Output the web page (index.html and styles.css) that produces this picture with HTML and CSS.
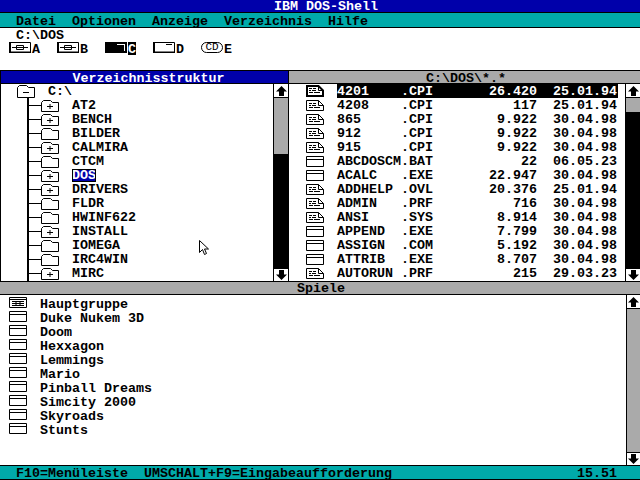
FILE: index.html
```html
<!DOCTYPE html>
<html lang="de">
<head>
<meta charset="utf-8">
<title>IBM DOS-Shell</title>
<link rel="stylesheet" href="styles.css">
</head>
<body>
<svg class="defs" width="0" height="0" aria-hidden="true">
  <symbol id="arrow-up" viewBox="0 0 11 10"><polygon points="5.5,0 11,5.5 8,5.5 8,10 3,10 3,5.5 0,5.5"/></symbol>
  <symbol id="arrow-down" viewBox="0 0 11 10"><polygon points="5.5,10 11,4.5 8,4.5 8,0 3,0 3,4.5 0,4.5"/></symbol>
  <symbol id="folder" viewBox="0 0 18 12"><path d="M.5 11.5V2.5L2.5.5H9.5L11.5 2.5H17.5V11.5Z" fill="#fff" stroke="#000"/></symbol>
  <symbol id="folder-plus" viewBox="0 0 18 12"><path d="M.5 11.5V2.5L2.5.5H9.5L11.5 2.5H17.5V11.5Z" fill="#fff" stroke="#000"/><path d="M6 6.5H12M9 4V9" stroke="#000" fill="none"/></symbol>
  <symbol id="folder-minus" viewBox="0 0 18 13"><path d="M.5 12.5V2.5L2.5.5H9.5L11.5 2.5H17.5V12.5Z" fill="#fff" stroke="#000"/><path d="M6 7.5H12" stroke="#000" fill="none"/></symbol>
  <symbol id="doc" viewBox="0 0 18 11"><path d="M.5.5H12.5L17.5 5.5V10.5H.5ZM12.5.5V5.5H17.5" fill="#fff" stroke="#000"/><path d="M3 3.5H6M7 3.5H10M3 5.5H5M6 5.5H10M3 7.5H7M8 7.5H14" stroke="#000" fill="none"/></symbol>
  <symbol id="doc-active" viewBox="0 0 18 12"><path d="M1 1H12.5L17 5.5V11H1Z" fill="#fff" stroke="#000" stroke-width="2"/><path d="M12.5 1V5.5H17" fill="none" stroke="#000"/><path d="M3 3.5H6M7 3.5H10M3 5.5H5M6 5.5H10M3 7.5H7M8 7.5H14" stroke="#000" fill="none"/></symbol>
  <symbol id="win" viewBox="0 0 18 11"><path d="M.5.5H17.5V10.5H.5ZM.5 3.5H17.5" fill="#fff" stroke="#000"/></symbol>
  <symbol id="group" viewBox="0 0 18 11"><path d="M.5.5H17.5V10.5H.5ZM.5 2.5H17.5" fill="#fff" stroke="#000"/><path d="M3 4.5H15M3 6.5H15M3 8.5H15M7 4V9M11 4V9" stroke="#000" fill="none"/></symbol>
  <symbol id="floppy" viewBox="0 0 22 11"><path d="M1 .5H21.5V10H1Z" fill="#fff" stroke="#000"/><path d="M0 0H2V11H0ZM0 10H22V11H0Z" fill="#000"/><path d="M3 5.5H19M7.5 3.5H14.5V7.5H7.5Z" stroke="#000" fill="none"/></symbol>
  <symbol id="disk" viewBox="0 0 22 11"><path d="M1 .5H21.5V10H1Z" fill="#fff" stroke="#000"/><path d="M0 0H2V11H0ZM0 10H22V11H0Z" fill="#000"/><path d="M13 2.5H19" stroke="#000" fill="none"/></symbol>
  <symbol id="disk-active" viewBox="0 0 22 11"><path d="M0 0H22V11H0Z" fill="#000"/><path d="M12 2H19V3H12ZM19 2H20V9H19Z" fill="#fff"/></symbol>
</svg>

<header class="title-bar">IBM DOS-Shell</header>
<nav class="menu-bar">
  <span>Datei</span><span>Optionen</span><span>Anzeige</span><span>Verzeichnis</span><span>Hilfe</span>
</nav>

<section class="drive-area">
  <div class="path">C:\DOS</div>
  <div class="drives">
    <div class="drive"><svg class="drive-icon"><use href="#floppy"/></svg><span>A</span></div>
    <div class="drive"><svg class="drive-icon"><use href="#floppy"/></svg><span>B</span></div>
    <div class="drive"><svg class="drive-icon"><use href="#disk-active"/></svg><span class="active">C</span></div>
    <div class="drive"><svg class="drive-icon"><use href="#disk"/></svg><span>D</span></div>
    <div class="drive"><span class="cd">CD</span><span>E</span></div>
  </div>
</section>

<section class="panes">
  <div class="pane pane-tree">
    <h2 class="pane-head head-active">Verzeichnisstruktur</h2>
    <div class="pane-body">
      <div class="tree">
        <div class="tree-root"><svg class="folder-root"><use href="#folder-minus"/></svg><span>C:\</span></div>
        <ul class="tree-list">
          <li class="tree-row"><i class="branch"></i><svg class="folder"><use href="#folder-plus"/></svg><span>AT2</span></li>
          <li class="tree-row"><i class="branch"></i><svg class="folder"><use href="#folder-plus"/></svg><span>BENCH</span></li>
          <li class="tree-row"><i class="branch"></i><svg class="folder"><use href="#folder"/></svg><span>BILDER</span></li>
          <li class="tree-row"><i class="branch"></i><svg class="folder"><use href="#folder-plus"/></svg><span>CALMIRA</span></li>
          <li class="tree-row"><i class="branch"></i><svg class="folder"><use href="#folder"/></svg><span>CTCM</span></li>
          <li class="tree-row"><i class="branch"></i><svg class="folder"><use href="#folder-plus"/></svg><span class="selected">DOS</span></li>
          <li class="tree-row"><i class="branch"></i><svg class="folder"><use href="#folder-plus"/></svg><span>DRIVERS</span></li>
          <li class="tree-row"><i class="branch"></i><svg class="folder"><use href="#folder"/></svg><span>FLDR</span></li>
          <li class="tree-row"><i class="branch"></i><svg class="folder"><use href="#folder"/></svg><span>HWINF622</span></li>
          <li class="tree-row"><i class="branch"></i><svg class="folder"><use href="#folder-plus"/></svg><span>INSTALL</span></li>
          <li class="tree-row"><i class="branch"></i><svg class="folder"><use href="#folder"/></svg><span>IOMEGA</span></li>
          <li class="tree-row"><i class="branch"></i><svg class="folder"><use href="#folder"/></svg><span>IRC4WIN</span></li>
          <li class="tree-row"><i class="branch"></i><svg class="folder"><use href="#folder-plus"/></svg><span>MIRC</span></li>
        </ul>
      </div>
      <div class="scrollbar">
        <div class="sb-btn sb-up"><svg class="arrow"><use href="#arrow-up"/></svg></div>
        <div class="sb-thumb thumb-tree"></div>
        <div class="sb-track"></div>
        <div class="sb-btn sb-down"><svg class="arrow"><use href="#arrow-down"/></svg></div>
      </div>
    </div>
  </div>

  <div class="pane pane-files">
    <h2 class="pane-head head-idle">C:\DOS\*.*</h2>
    <div class="pane-body">
      <ul class="files">
        <li class="file current"><svg class="ficon ficon-active"><use href="#doc-active"/></svg><div class="frow"><span class="fname">4201</span><span class="fext">.CPI</span><span class="fsize">26.420</span><span class="fdate">25.01.94</span></div></li>
        <li class="file"><svg class="ficon"><use href="#doc"/></svg><div class="frow"><span class="fname">4208</span><span class="fext">.CPI</span><span class="fsize">117</span><span class="fdate">25.01.94</span></div></li>
        <li class="file"><svg class="ficon"><use href="#doc"/></svg><div class="frow"><span class="fname">865</span><span class="fext">.CPI</span><span class="fsize">9.922</span><span class="fdate">30.04.98</span></div></li>
        <li class="file"><svg class="ficon"><use href="#doc"/></svg><div class="frow"><span class="fname">912</span><span class="fext">.CPI</span><span class="fsize">9.922</span><span class="fdate">30.04.98</span></div></li>
        <li class="file"><svg class="ficon"><use href="#doc"/></svg><div class="frow"><span class="fname">915</span><span class="fext">.CPI</span><span class="fsize">9.922</span><span class="fdate">30.04.98</span></div></li>
        <li class="file"><svg class="ficon"><use href="#win"/></svg><div class="frow"><span class="fname">ABCDOSCM</span><span class="fext">.BAT</span><span class="fsize">22</span><span class="fdate">06.05.23</span></div></li>
        <li class="file"><svg class="ficon"><use href="#win"/></svg><div class="frow"><span class="fname">ACALC</span><span class="fext">.EXE</span><span class="fsize">22.947</span><span class="fdate">30.04.98</span></div></li>
        <li class="file"><svg class="ficon"><use href="#doc"/></svg><div class="frow"><span class="fname">ADDHELP</span><span class="fext">.OVL</span><span class="fsize">20.376</span><span class="fdate">25.01.94</span></div></li>
        <li class="file"><svg class="ficon"><use href="#doc"/></svg><div class="frow"><span class="fname">ADMIN</span><span class="fext">.PRF</span><span class="fsize">716</span><span class="fdate">30.04.98</span></div></li>
        <li class="file"><svg class="ficon"><use href="#doc"/></svg><div class="frow"><span class="fname">ANSI</span><span class="fext">.SYS</span><span class="fsize">8.914</span><span class="fdate">30.04.98</span></div></li>
        <li class="file"><svg class="ficon"><use href="#win"/></svg><div class="frow"><span class="fname">APPEND</span><span class="fext">.EXE</span><span class="fsize">7.799</span><span class="fdate">30.04.98</span></div></li>
        <li class="file"><svg class="ficon"><use href="#win"/></svg><div class="frow"><span class="fname">ASSIGN</span><span class="fext">.COM</span><span class="fsize">5.192</span><span class="fdate">30.04.98</span></div></li>
        <li class="file"><svg class="ficon"><use href="#win"/></svg><div class="frow"><span class="fname">ATTRIB</span><span class="fext">.EXE</span><span class="fsize">8.707</span><span class="fdate">30.04.98</span></div></li>
        <li class="file"><svg class="ficon"><use href="#doc"/></svg><div class="frow"><span class="fname">AUTORUN</span><span class="fext">.PRF</span><span class="fsize">215</span><span class="fdate">29.03.23</span></div></li>
      </ul>
      <div class="scrollbar">
        <div class="sb-btn sb-up"><svg class="arrow"><use href="#arrow-up"/></svg></div>
        <div class="sb-thumb thumb-files"></div>
        <div class="sb-track"></div>
        <div class="sb-btn sb-down"><svg class="arrow"><use href="#arrow-down"/></svg></div>
      </div>
    </div>
  </div>
</section>

<h2 class="programs-head">Spiele</h2>
<section class="programs">
  <ul class="program-list">
    <li class="program"><svg class="picon"><use href="#group"/></svg><span>Hauptgruppe</span></li>
    <li class="program"><svg class="picon"><use href="#win"/></svg><span>Duke Nukem 3D</span></li>
    <li class="program"><svg class="picon"><use href="#win"/></svg><span>Doom</span></li>
    <li class="program"><svg class="picon"><use href="#win"/></svg><span>Hexxagon</span></li>
    <li class="program"><svg class="picon"><use href="#win"/></svg><span>Lemmings</span></li>
    <li class="program"><svg class="picon"><use href="#win"/></svg><span>Mario</span></li>
    <li class="program"><svg class="picon"><use href="#win"/></svg><span>Pinball Dreams</span></li>
    <li class="program"><svg class="picon"><use href="#win"/></svg><span>Simcity 2000</span></li>
    <li class="program"><svg class="picon"><use href="#win"/></svg><span>Skyroads</span></li>
    <li class="program"><svg class="picon"><use href="#win"/></svg><span>Stunts</span></li>
  </ul>
  <div class="scrollbar sb-programs">
    <div class="sb-btn sb-up"><svg class="arrow"><use href="#arrow-up"/></svg></div>
    <div class="sb-thumb thumb-programs"></div>
    <div class="sb-btn sb-down"><svg class="arrow"><use href="#arrow-down"/></svg></div>
  </div>
</section>

<footer class="status-bar">
  <span>F10=Menüleiste</span><span class="status-hint">UMSCHALT+F9=Eingabeaufforderung</span><span class="clock">15.51</span>
</footer>

<svg class="pointer" width="11" height="16" viewBox="0 0 11 16"><path d="M.5.5V12.5L3.5 9.5L5.5 14.5L7.5 13.5L5.5 9H9.5Z" fill="#fff" stroke="#000"/></svg>
</body>
</html>
```

FILE: styles.css
```css
* { box-sizing: border-box; margin: 0; padding: 0; }

html, body { width: 640px; height: 480px; overflow: hidden; }

body {
  position: relative;
  display: flex;
  flex-direction: column;
  background: #fff;
  color: #000;
  font: bold 13.333px/16px "Liberation Mono", monospace;
}

.defs { position: absolute; }

ul { list-style: none; }
h2 { font: inherit; }
svg { display: block; flex: none; }

.title-bar {
  height: 13px;
  background: #0000aa;
  color: #fff;
  border-bottom: 1px solid #000;
  line-height: 14px;
  text-align: center;
  padding-left: 12px;
}

.menu-bar {
  height: 15px;
  display: flex;
  gap: 16px;
  padding-left: 16px;
  background: #00aaaa;
  border-bottom: 1px solid #000;
  line-height: 17px;
}

.drive-area { height: 42px; padding-top: 1px; }
.path { padding-left: 16px; height: 13px; line-height: 13px; }

.drives {
  display: grid;
  grid-auto-flow: column;
  grid-auto-columns: 48px;
  justify-content: start;
  padding-left: 9px;
}

.drive { display: flex; align-items: flex-start; gap: 1px; height: 14px; }
.drive-icon { width: 22px; height: 11px; }
.drive .active { background: #000; color: #fff; height: 13px; }
.cd {
  width: 22px;
  height: 11px;
  border: 1px solid #000;
  border-radius: 6px;
  font-size: 11px;
  font-weight: normal;
  line-height: 9px;
  text-align: center;
}

.panes { display: flex; height: 211px; border-top: 1px solid #000; }
.pane { display: flex; flex-direction: column; }
.pane-tree { width: 289px; border-left: 1px solid #000; border-right: 1px solid #000; }
.pane-files { flex: 1; min-width: 0; }

.pane-head { height: 13px; border-bottom: 1px solid #000; text-align: center; }
.head-active { background: #0000aa; color: #fff; padding-left: 8px; }
.head-idle { background: #aaaaaa; padding-left: 3px; }

.pane-body { flex: 1; display: flex; min-height: 0; }

.tree { flex: 1; min-width: 0; overflow: hidden; }
.tree-root { height: 14px; display: flex; align-items: flex-start; gap: 13px; padding-left: 16px; }
.folder-root { width: 18px; height: 13px; margin-top: 1px; }
.tree-list { margin-left: 26px; border-left: 2px solid #000; height: 183px; overflow: hidden; }
.tree-row { height: 14px; display: flex; align-items: flex-start; }
.branch { width: 12px; height: 1px; margin-top: 7px; background: #000; flex: none; }
.folder { width: 18px; height: 12px; margin: 2px 13px 0 0; }
.selected {
  height: 13px;
  margin-top: 1px;
  line-height: 14px;
  background: #0000aa;
  color: #fff;
  outline: 1px solid #000;
  outline-offset: -1px;
}

.scrollbar { width: 15px; flex: none; display: flex; flex-direction: column; border-left: 1px solid #000; }
.sb-btn { flex: none; height: 14px; display: flex; align-items: center; justify-content: center; }
.sb-up { border-bottom: 1px solid #000; }
.sb-down { height: 13px; border-top: 1px solid #000; }
.arrow { width: 11px; height: 10px; }
.sb-thumb { background: #aaaaaa; flex: none; }
.thumb-tree { height: 56px; }
.thumb-files { height: 14px; }
.sb-track { flex: 1; background: #000; }

.files { flex: 1; min-width: 0; overflow: hidden; }
.file { height: 14px; display: flex; align-items: flex-start; padding-left: 17px; }
.ficon { width: 18px; height: 11px; margin-top: 2px; }
.ficon-active { height: 12px; margin-top: 1px; }
.frow { display: flex; height: 14px; margin-left: 13px; width: 281px; }
.fname { width: 64px; }
.fext { width: 32px; }
.fsize { width: 104px; text-align: right; }
.fdate { margin-left: 16px; }
.current .frow { background: #000; color: #fff; }

.programs-head {
  height: 14px;
  line-height: 14px;
  background: #aaaaaa;
  border-top: 1px solid #000;
  border-bottom: 1px solid #000;
  text-align: center;
  padding-left: 2px;
}

.programs { flex: 1; min-height: 0; display: flex; }
.program-list { flex: 1; padding-top: 2px; }
.program { height: 14px; display: flex; align-items: flex-start; padding-left: 9px; gap: 13px; }
.picon { width: 18px; height: 11px; }

.sb-programs { width: 14px; }
.thumb-programs { flex: 1; }

.status-bar {
  height: 15px;
  display: flex;
  padding-left: 16px;
  background: #00aaaa;
  border-top: 1px solid #000;
  border-bottom: 1px solid #000;
  line-height: 15px;
}
.status-hint { margin-left: 16px; }
.clock { margin-left: auto; margin-right: 23px; }

.pointer { position: absolute; left: 199px; top: 240px; }
```
